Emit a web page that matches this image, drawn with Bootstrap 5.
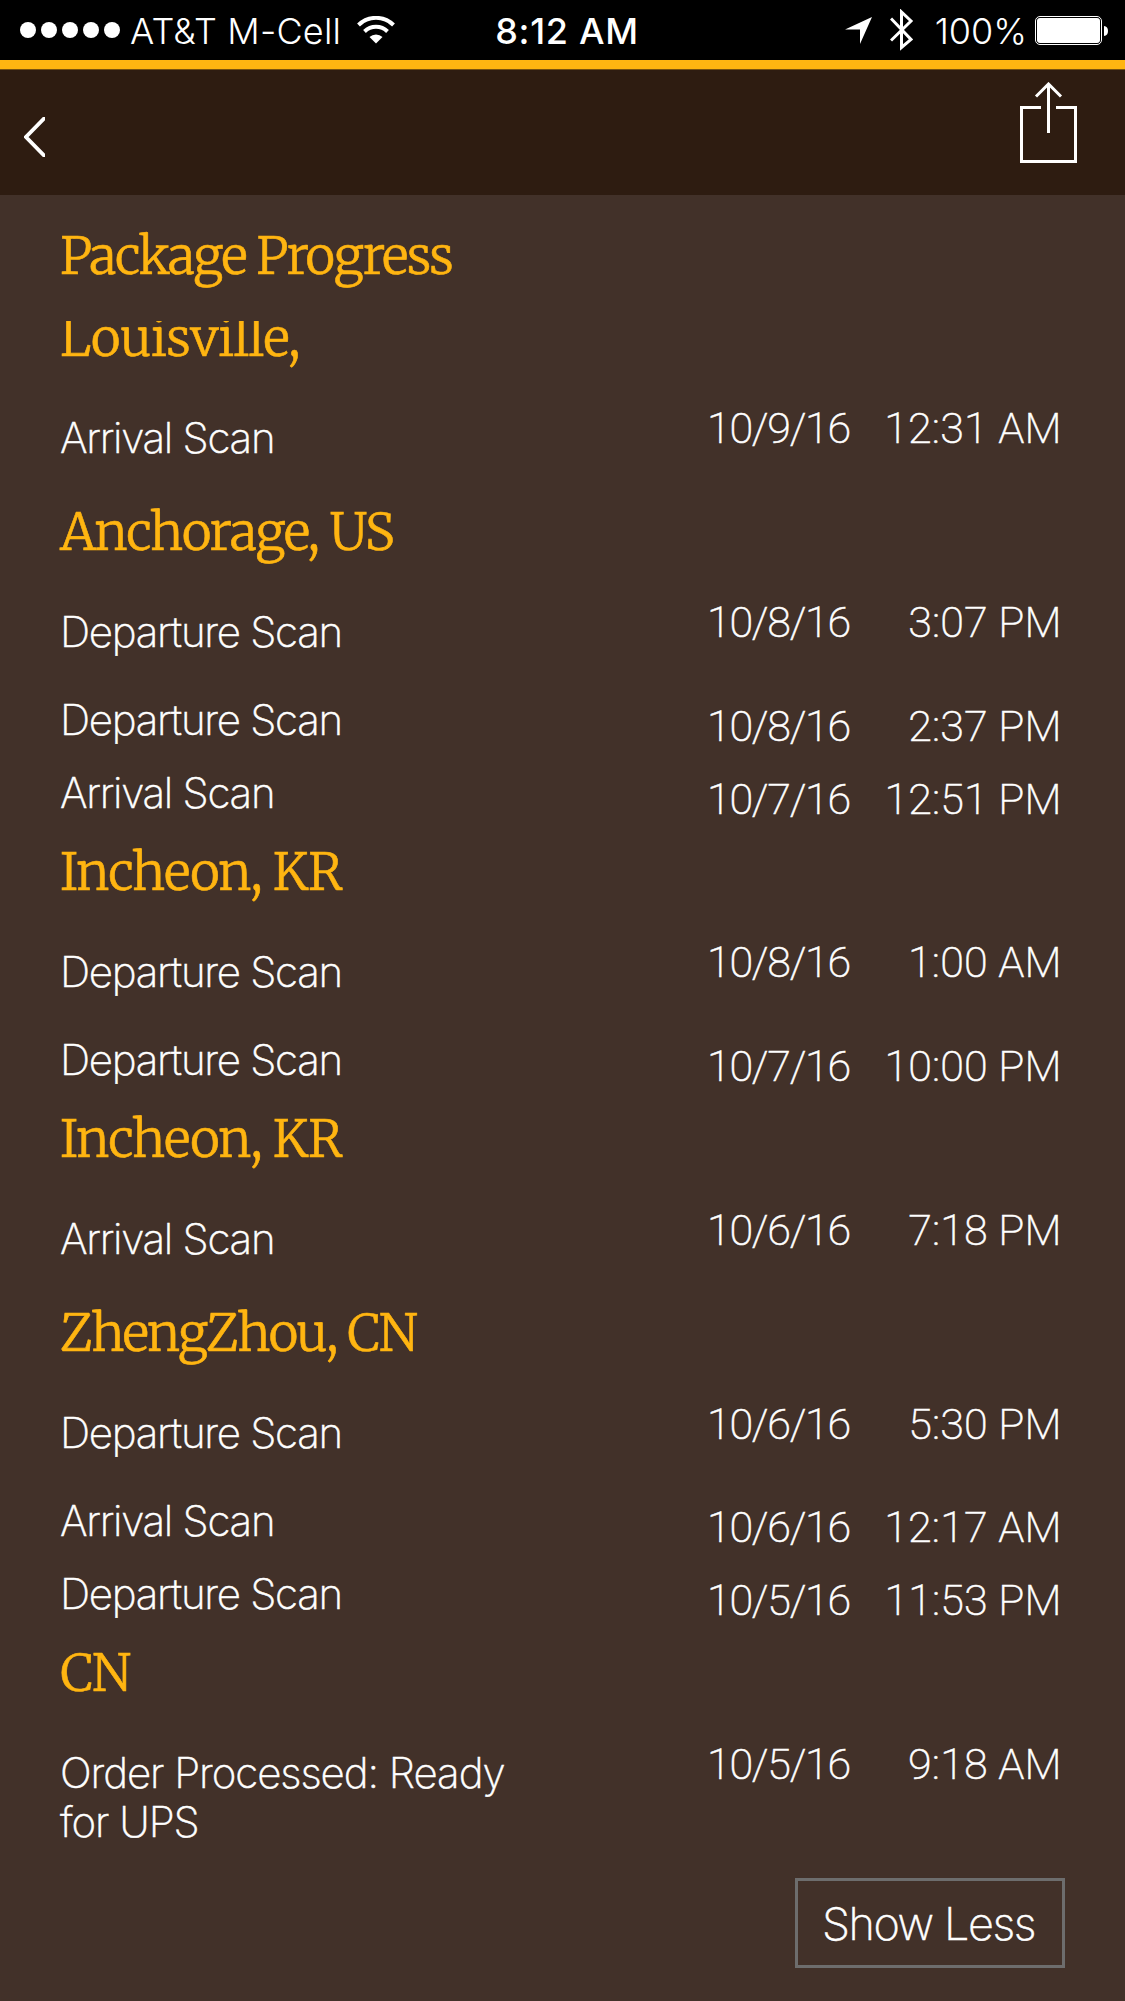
<!DOCTYPE html>
<html lang="en">
<head>
<meta charset="utf-8">
<meta name="viewport" content="width=device-width, initial-scale=1">
<title>Package Progress</title>
<link href="https://cdn.jsdelivr.net/npm/bootstrap@5.3.0/dist/css/bootstrap.min.css" rel="stylesheet">
<style>
  body { background: #423129; color: #fff; font-family: Inter, "Liberation Sans", sans-serif; height: 2001px; overflow: hidden; }
  svg { display: block; flex: none; }
  .status-bar { height: 60px; background: #000; font-size: 36px; line-height: 60px; padding: 0 16px 0 20px; }
  .status-side { flex: 1 0 0; }
  .carrier { font-weight: 300; letter-spacing: .2px; margin-left: 10px; padding-top: 2px; }
  .clock { font-weight: 500; letter-spacing: .7px; padding-top: 1px; margin-left: 5px; }
  .bluetooth { margin: 0 21px 0 18px; }
  .battery-level { font-weight: 300; padding-top: 2px; margin-right: 8px; }
  .top-nav { height: 135px; background: #2e1c11; border-top: 9px solid #ffb511; box-shadow: inset 0 1px #7a5310; padding: 0 48px 0 24px; }
  .back-icon { margin-top: 48px; }
  .share-icon { margin-top: 13px; }
  .yellow-serif { font-family: Merriweather, "DejaVu Serif Condensed", serif; font-weight: 300; font-size: 51px; line-height: 68px; padding-bottom: 2px; letter-spacing: -1.3px; color: #ffb511; margin: 0; white-space: nowrap; -webkit-text-stroke: .6px #ffb511; }
  .page-title { height: 126px; padding: 27px 0 0 60px; letter-spacing: -1.65px; }
  .scan-list { overflow: hidden; padding: 0 65px 0 60px; height: 1680px; }
  .scan-list > section:first-child { margin-top: -17px; }
  .tight { letter-spacing: -1.75px; }
  .wide-set { letter-spacing: -.4px; }
  .medium-set { letter-spacing: -1.1px; }
  .scan-row { height: 73.1px; font-weight: 200; font-size: 42px; line-height: 49px; -webkit-text-stroke: .5px #fff; }
  .scan-label { width: 500px; padding-top: 3px; letter-spacing: -1.25px; }
  .scan-label.order-label { letter-spacing: -1.05px; }
  .scan-date, .scan-time { font-family: Roboto, "Liberation Sans", sans-serif; font-size: 43px; padding-top: 10px; white-space: nowrap; }
  .scan-date { width: 150px; margin-left: 147px; letter-spacing: -1.25px; }
  .scan-time { letter-spacing: .1px; margin-right: -1.5px; }
  .scan-row.lead-row { height: 124px; }
  .lead-row .scan-label { padding-top: 38.500px; }
  .lead-row .scan-date, .lead-row .scan-time { padding-top: 30.300px; }
  .list-actions { margin: 44.500px -5px 0 0; }
  .btn.show-less { width: 270px; height: 90px; border: 3px solid #6d6d6d; border-radius: 0; color: #fff; font-size: 45px; font-weight: 200; letter-spacing: -1.4px; line-height: 84px; padding: 1px 3px 0 0; -webkit-text-stroke: .5px #fff; }
</style>
</head>
<body>
<header>
  <div class="status-bar d-flex justify-content-between">
    <div class="status-side d-flex align-items-center">
      <svg width="100" height="16" viewBox="0 0 100 16" fill="#fff"><circle cx="8" cy="8" r="8"/><circle cx="29" cy="8" r="8"/><circle cx="50" cy="8" r="8"/><circle cx="71" cy="8" r="8"/><circle cx="92" cy="8" r="8"/></svg>
      <span class="carrier">AT&amp;T M-Cell</span>
      <svg class="ms-3" width="38" height="28" viewBox="0 0 38 28"><path d="M1.500 9A25 25 0 0 1 36.500 9M7.500 15.500A16.500 16.500 0 0 1 30.500 15.500" fill="none" stroke="#fff" stroke-width="4"/><path d="M12.500 21A9.500 9.500 0 0 1 25.500 21L19 27.500Z" fill="#fff"/></svg>
    </div>
    <div class="clock">8:12 AM</div>
    <div class="status-side d-flex align-items-center justify-content-end">
      <svg width="27" height="27" viewBox="0 0 27 27" fill="#fff"><path d="M0 12.500L27 0L15 27V12.500Z"/></svg>
      <svg class="bluetooth" width="24" height="42" viewBox="0 0 24 42"><path d="M1 9.500L21 30.500L11.500 38.500V3L21 12L1 31.500" fill="none" stroke="#fff" stroke-width="3"/></svg>
      <span class="battery-level">100%</span>
      <svg width="74" height="29" viewBox="0 0 74 29"><rect x=".5" y=".5" width="66" height="28" rx="4.500" fill="none" stroke="#fff"/><rect x="2" y="2" width="63" height="25" rx="3" fill="#fff"/><path d="M69 10Q73 10.500 73 15T69 20Z" fill="#fff"/></svg>
    </div>
  </div>
  <nav class="top-nav d-flex justify-content-between">
    <svg class="back-icon" width="21" height="40" viewBox="0 0 21 40"><path d="M22.500 -1L2 20L22.500 41" fill="none" stroke="#fff" stroke-width="3.800"/></svg>
    <svg class="share-icon" width="57" height="81" viewBox="0 0 57 81"><path d="M21 25.500H1.500V79.500H55.500V25.500H36M28.500 51V2.500M16 14.500L28.500 2L41 14.500" fill="none" stroke="#fff" stroke-width="3"/></svg>
  </nav>
</header>
<main>
  <h1 class="yellow-serif page-title">Package Progress</h1>
  <div class="scan-list">
    <section>
      <h2 class="yellow-serif wide-set">Louisville,</h2>
      <div class="scan-row lead-row d-flex"><div class="scan-label">Arrival Scan</div><div class="scan-date">10/9/16</div><div class="scan-time ms-auto">12:31 AM</div></div>
    </section>
    <section>
      <h2 class="yellow-serif">Anchorage, US</h2>
      <div class="scan-row lead-row d-flex"><div class="scan-label">Departure Scan</div><div class="scan-date">10/8/16</div><div class="scan-time ms-auto">3:07 PM</div></div>
      <div class="scan-row d-flex"><div class="scan-label">Departure Scan</div><div class="scan-date">10/8/16</div><div class="scan-time ms-auto">2:37 PM</div></div>
      <div class="scan-row d-flex"><div class="scan-label">Arrival Scan</div><div class="scan-date">10/7/16</div><div class="scan-time ms-auto">12:51 PM</div></div>
    </section>
    <section>
      <h2 class="yellow-serif medium-set">Incheon, KR</h2>
      <div class="scan-row lead-row d-flex"><div class="scan-label">Departure Scan</div><div class="scan-date">10/8/16</div><div class="scan-time ms-auto">1:00 AM</div></div>
      <div class="scan-row d-flex"><div class="scan-label">Departure Scan</div><div class="scan-date">10/7/16</div><div class="scan-time ms-auto">10:00 PM</div></div>
    </section>
    <section>
      <h2 class="yellow-serif medium-set">Incheon, KR</h2>
      <div class="scan-row lead-row d-flex"><div class="scan-label">Arrival Scan</div><div class="scan-date">10/6/16</div><div class="scan-time ms-auto">7:18 PM</div></div>
    </section>
    <section>
      <h2 class="yellow-serif tight">ZhengZhou, CN</h2>
      <div class="scan-row lead-row d-flex"><div class="scan-label">Departure Scan</div><div class="scan-date">10/6/16</div><div class="scan-time ms-auto">5:30 PM</div></div>
      <div class="scan-row d-flex"><div class="scan-label">Arrival Scan</div><div class="scan-date">10/6/16</div><div class="scan-time ms-auto">12:17 AM</div></div>
      <div class="scan-row d-flex"><div class="scan-label">Departure Scan</div><div class="scan-date">10/5/16</div><div class="scan-time ms-auto">11:53 PM</div></div>
    </section>
    <section>
      <h2 class="yellow-serif">CN</h2>
      <div class="scan-row lead-row d-flex"><div class="scan-label order-label">Order Processed: Ready for UPS</div><div class="scan-date">10/5/16</div><div class="scan-time ms-auto">9:18 AM</div></div>
    </section>
    <div class="list-actions d-flex justify-content-end"><button type="button" class="btn show-less">Show Less</button></div>
  </div>
</main>
<script src="https://cdn.jsdelivr.net/npm/bootstrap@5.3.0/dist/js/bootstrap.bundle.min.js"></script>
</body>
</html>
